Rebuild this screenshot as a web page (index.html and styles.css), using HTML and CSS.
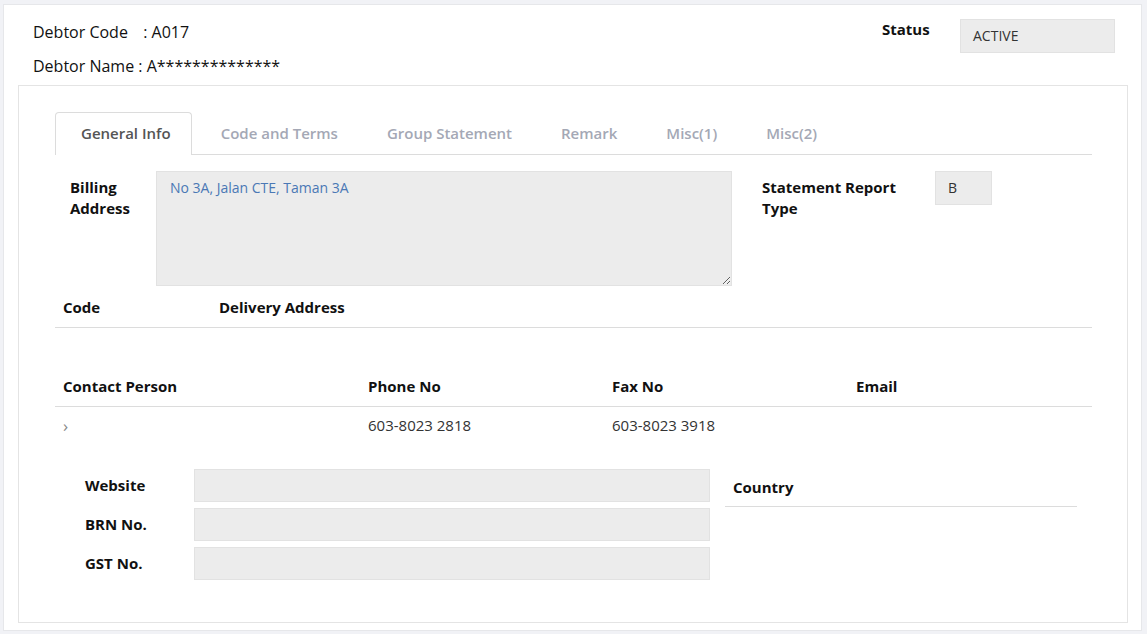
FILE: index.html
```html
<!DOCTYPE html>
<html lang="en">
<head>
    <meta charset="UTF-8">
    <meta name="viewport" content="width=device-width, initial-scale=1.0">
    <title>Debtor Maintenance</title>
    <link rel="stylesheet" href="styles.css">
</head>
<body>
    <div class="card">
        <div class="debtor-head">
            <div class="debtor-id">
                <div class="id-line"><span class="id-label">Debtor Code</span> : A017</div>
                <div class="id-line"><span class="id-label-short">Debtor Name</span> : A**************</div>
            </div>
            <div class="status">
                <span class="status-label">Status</span>
                <div class="field status-field">ACTIVE</div>
            </div>
        </div>

        <div class="panel">
            <ul class="tabs">
                <li class="tab active">General Info</li>
                <li class="tab">Code and Terms</li>
                <li class="tab">Group Statement</li>
                <li class="tab">Remark</li>
                <li class="tab">Misc(1)</li>
                <li class="tab">Misc(2)</li>
            </ul>

            <div class="billing-row">
                <label class="billing-label">Billing<br>Address</label>
                <textarea class="billing-box" readonly>No 3A, Jalan CTE, Taman 3A</textarea>
                <label class="report-label">Statement Report<br>Type</label>
                <div class="field report-field">B</div>
            </div>

            <table class="grid delivery">
                <colgroup><col class="c-code"><col></colgroup>
                <thead>
                    <tr><th>Code</th><th>Delivery Address</th></tr>
                </thead>
            </table>

            <table class="grid contacts">
                <colgroup><col class="c-person"><col class="c-num"><col class="c-num"><col></colgroup>
                <thead>
                    <tr><th>Contact Person</th><th>Phone No</th><th>Fax No</th><th>Email</th></tr>
                </thead>
                <tbody>
                    <tr>
                        <td><span class="chevron">&#8250;</span></td>
                        <td>603-8023 2818</td>
                        <td>603-8023 3918</td>
                        <td></td>
                    </tr>
                </tbody>
            </table>

            <div class="bottom-row">
                <div class="id-fields">
                    <label>Website</label><div class="field"></div>
                    <label>BRN No.</label><div class="field"></div>
                    <label>GST No.</label><div class="field"></div>
                </div>
                <div class="country">Country</div>
            </div>
        </div>
    </div>
</body>
</html>
```

FILE: styles.css
```css
body {
    margin: 0;
    padding: 4px 5px 4px 3px;
    background: #f1f2f6;
    font-family: "Open Sans", Arial, sans-serif;
    color: #222;
}
.card {
    background: white;
    border: 1px solid #e6e7ea;
    padding: 0 13px 7px 14px;
}
.debtor-head {
    display: flex;
    justify-content: space-between;
    align-items: flex-start;
    padding: 14px 13px 0 15px;
    height: 66px;
}
.debtor-id {
    padding-top: 2px;
}
.id-line {
    font-size: 16px;
    line-height: 22px;
    margin-bottom: 12px;
    color: #111;
}
.id-label {
    display: inline-block;
    width: 106px;
}
.status {
    display: flex;
    align-items: flex-start;
}
.status-label {
    font-weight: bold;
    font-size: 15px;
    line-height: 22px;
    margin-top: -1px;
    width: 78px;
    color: #111;
}
.field {
    background: #ececec;
    border: 1px solid #e2e2e2;
    height: 31px;
    box-sizing: border-box;
    font-size: 14px;
    color: #333;
    padding: 0 12px;
    line-height: 31px;
}
.status-field {
    width: 155px;
    height: 34px;
    line-height: 32px;
    margin-top: 0;
}
.panel {
    border: 1px solid #e4e4e4;
    padding: 26px 35px 42px 36px;
}
.tabs {
    list-style: none;
    margin: 0;
    padding: 0;
    display: flex;
    border-bottom: 1px solid #dcdcdc;
}
.tab {
    font-size: 15px;
    line-height: 41px;
    padding: 0 19px 0 28px;
    color: #a4a8b5;
    font-weight: 600;
    border: 1px solid transparent;
    border-bottom: none;
}
.tab.active {
    color: #555;
    padding: 0 20px 0 25px;
    border-color: #dcdcdc;
    border-radius: 4px 4px 0 0;
    background: white;
    margin-bottom: -1px;
    height: 42px;
}
.billing-row {
    display: flex;
    align-items: flex-start;
    margin-top: 16px;
}
.billing-label, .report-label {
    font-weight: bold;
    font-size: 15px;
    line-height: 21px;
    color: #111;
    padding-top: 6px;
}
.billing-label {
    width: 86px;
    padding-left: 15px;
}
.billing-box {
    width: 576px;
    height: 115px;
    box-sizing: border-box;
    background: #ececec;
    border: 1px solid #e2e2e2;
    font-family: inherit;
    font-size: 14px;
    color: #4a78b5;
    padding: 6px 13px;
    margin: 0;
}
.report-label {
    width: 173px;
    padding-left: 30px;
}
.report-field {
    width: 57px;
    height: 34px;
    line-height: 32px;
}
.grid {
    width: 100%;
    border-collapse: collapse;
    font-size: 15px;
}
.grid th {
    text-align: left;
    font-weight: bold;
    color: #111;
    padding: 0 8px 2px;
    border-bottom: 1px solid #dcdcdc;
}
.delivery {
    margin-top: 2px;
}
.delivery th {
    height: 37px;
}
.c-code { width: 156px; }
.contacts {
    margin-top: 39px;
}
.contacts th {
    height: 37px;
}
.contacts td {
    padding: 0 8px;
    height: 36px;
    color: #333;
}
.c-person { width: 305px; }
.c-num { width: 244px; }
.chevron {
    color: #888;
    font-size: 17px;
}
.bottom-row {
    display: flex;
    align-items: flex-start;
    margin-top: 26px;
}
.id-fields {
    display: grid;
    grid-template-columns: 139px 516px;
    row-gap: 6px;
}
.id-fields label {
    font-weight: bold;
    font-size: 15px;
    line-height: 33px;
    color: #111;
    padding-left: 30px;
}
.id-fields .field {
    height: 33px;
}
.country {
    margin-left: 15px;
    width: 352px;
    font-weight: bold;
    font-size: 15px;
    color: #111;
    padding: 8px 8px 9px;
    box-sizing: border-box;
    border-bottom: 1px solid #dcdcdc;
}
```
